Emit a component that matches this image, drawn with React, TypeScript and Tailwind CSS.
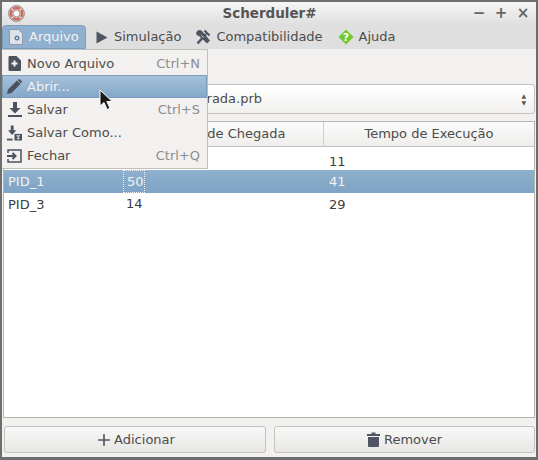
import { Plus } from "lucide-react";

const font = "font-['DejaVu_Sans',sans-serif]";

const LifeRing = () => (
  <svg width="17" height="17" viewBox="0 0 17 17">
    <circle cx="8.5" cy="8.5" r="7.800" fill="#f0e6e4" stroke="#6e6e6e" strokeWidth="0.9" />
    <circle cx="8.5" cy="8.5" r="5.600" fill="none" stroke="#cf6a5c" strokeWidth="2.600" />
    <circle cx="8.5" cy="8.5" r="3.500" fill="#f8f8f8" stroke="#777" strokeWidth="0.8" />
    <path d="M3.600 3.600l2 2M13.400 3.600l-2 2M3.600 13.400l2-2M13.400 13.400l-2-2" stroke="#f3e9e7" strokeWidth="1.200" />
  </svg>
);

const FileIcon = () => (
  <svg width="14" height="16" viewBox="0 0 14 16">
    <path d="M0.500 0.500h9l4 4v11H0.500z" fill="#dfe3e8" stroke="#8f98a8" />
    <circle cx="8" cy="9" r="1.800" fill="none" stroke="#5f7fa6" strokeWidth="1.400" />
  </svg>
);

const PlayIcon = () => (
  <svg width="12" height="13" viewBox="0 0 12 13">
    <path d="M0.500 0.500L11.500 6.500 0.500 12.500z" fill="#4f5563" />
  </svg>
);

const ToolsIcon = () => (
  <svg width="16" height="16" viewBox="0 0 16 16" fill="none">
    <path d="M2.500 14.500L11 5" stroke="#4f5563" strokeWidth="2.600" />
    <path d="M1 4c1-3 4-4 6-2l8 9.500-3 3L4 7C2.500 7 1.500 6 1 4z" fill="#4f5563" />
    <path d="M9.500 1.500l5 5" stroke="#4f5563" strokeWidth="2.200" />
    <path d="M6.500 6.500l2 2" stroke="#dfdfdf" strokeWidth="1" />
  </svg>
);

const HelpIcon = () => (
  <svg width="16" height="16" viewBox="0 0 16 16">
    <path d="M8 0.500L15.500 8 8 15.500 0.500 8z" fill="#6fc92f" />
    <text x="8" y="12" fontSize="11" fontWeight="700" textAnchor="middle" fill="#fff">?</text>
  </svg>
);

const NewIcon = () => (
  <svg width="13" height="15" viewBox="0 0 13 15">
    <path d="M1.500 0h7L13 4.500V14a1 1 0 0 1-1 1H1.500a1 1 0 0 1-1-1V1a1 1 0 0 1 1-1z" fill="#4c5160" />
    <path d="M6.500 4.500v6M3.500 7.500h6" stroke="#f2f1f0" strokeWidth="2" />
  </svg>
);

const PencilIcon = () => (
  <svg width="15" height="15" viewBox="0 0 15 15">
    <path d="M0 15l1-4.500L10 1.500 13.500 5 4.500 14z" fill="#4c5160" />
    <path d="M11.500 0.500l3 3" stroke="#4c5160" strokeWidth="2" />
  </svg>
);

const SaveIcon = () => (
  <svg width="14" height="15" viewBox="0 0 14 15">
    <path d="M5 0h4v6h3.500L7 11.500 1.500 6H5z" fill="#4c5160" />
    <path d="M0 14h14" stroke="#4c5160" strokeWidth="2" />
  </svg>
);

const SaveAsIcon = () => (
  <svg width="16" height="16" viewBox="0 0 16 16">
    <path d="M4 0h3v5h3L5.500 10 1 5h3z" fill="#4c5160" />
    <path d="M0 15h6" stroke="#4c5160" strokeWidth="2" />
    <rect x="8" y="9" width="8" height="7" fill="#4c5160" />
    <path d="M10 11h4M12 11v3M10.500 14h3" stroke="#f2f1f0" strokeWidth="1" />
  </svg>
);

const CloseIcon = () => (
  <svg width="15" height="14" viewBox="0 0 15 14" fill="none">
    <path d="M1 4V1h13v12H1v-3" stroke="#4c5160" strokeWidth="1.500" />
    <path d="M0 7h8M5.500 4l3 3-3 3" stroke="#4c5160" strokeWidth="2" />
  </svg>
);

const TrashIcon = () => (
  <svg width="13" height="15" viewBox="0 0 13 15">
    <path d="M0 2h4.500V0.500h4V2H13v2H0z" fill="#4f5563" />
    <path d="M1 5h11v9a1 1 0 0 1-1 1H2a1 1 0 0 1-1-1z" fill="#4f5563" />
  </svg>
);

const Cursor = () => (
  <svg width="15" height="22" viewBox="0 0 15 22">
    <path d="M1 1v16l4-3.500 3.200 7 2.800-1.200-3.200-6.800h5.500z" fill="#1a1a1a" stroke="#fff" strokeWidth="1" />
  </svg>
);

const items = [
  { label: "Novo Arquivo", shortcut: "Ctrl+N", icon: <NewIcon /> },
  { label: "Abrir...", shortcut: "", icon: <PencilIcon />, active: true },
  { label: "Salvar", shortcut: "Ctrl+S", icon: <SaveIcon /> },
  { label: "Salvar Como...", shortcut: "", icon: <SaveAsIcon /> },
  { label: "Fechar", shortcut: "Ctrl+Q", icon: <CloseIcon /> },
];

// the first row's first two cells sit behind the open menu
const rows = [
  { pid: "", arrival: "", burst: "11" },
  { pid: "PID_1", arrival: "50", burst: "41", selected: true },
  { pid: "PID_3", arrival: "14", burst: "29" },
];

export default function App() {
  return (
    <div className={`${font} relative flex h-[460px] w-[538px] flex-col overflow-hidden border-x-2 border-t-2 border-b-[3px] border-[#6e6e6e] bg-[#f2f1f0] text-[13px] text-[#4c4c4c]`}>
      {/* Title bar */}
      <div className="flex h-[23px] items-center bg-gradient-to-b from-[#f6f6f6] to-[#dfdfdf] pl-[6px] pr-[2px]">
        <LifeRing />
        <div className="flex-1 pl-[46px] text-center text-[13.500px] font-bold text-[#555]">Scherduler#</div>
        <div className="flex text-center text-[15px] font-bold leading-none text-[#666]">
          <span className="w-[22px]">−</span>
          <span className="w-[22px]">+</span>
          <span className="w-[22px]">×</span>
        </div>
      </div>

      {/* Menu bar */}
      <div className="flex h-[24px] items-center bg-[#dfdfdf]">
        <div className="flex h-[24px] w-[84px] items-center gap-[6px] rounded-t-[4px] border border-[#7b9ebd] bg-[#8fb0ce] pl-[6px] text-[#f2f2f2]">
          <FileIcon />
          <span>Arquivo</span>
        </div>
        <div className="ml-[10px] flex items-center gap-[6px]">
          <PlayIcon />
          <span>Simulação</span>
        </div>
        <div className="ml-[14px] flex items-center gap-[5px]">
          <ToolsIcon />
          <span>Compatibilidade</span>
        </div>
        <div className="ml-[15px] flex items-center gap-[5px]">
          <HelpIcon />
          <span>Ajuda</span>
        </div>
      </div>

      {/* Content */}
      <div className="flex min-h-0 flex-1 flex-col px-[1px] pt-[35px]">
        <div className="flex h-[30px] items-center justify-between rounded-[3px] border border-[#c4c2bd] bg-gradient-to-b from-white to-[#f2f1f0] pl-[181px] pr-[8px]">
          <span>Entrada.prb</span>
          <span className="flex flex-col text-[6px] leading-[7px] text-[#555]">
            <span>▲</span>
            <span>▼</span>
          </span>
        </div>

        <div className="mt-[7px] flex h-[297px] flex-col border border-[#b6b4af] bg-white">
          <div className="grid h-[25px] grid-cols-[119px_201px_1fr] border-b border-[#c4c2bd] bg-gradient-to-b from-[#fbfbfb] to-[#efeeec] text-center">
            <div className="border-r border-[#d0cec9]" />
            <div className="flex items-center justify-center border-r border-[#d0cec9]">Tempo de Chegada</div>
            <div className="flex items-center justify-center">Tempo de Execução</div>
          </div>
          {rows.map((row) => (
            <div
              key={row.burst}
              className={`grid h-[23px] grid-cols-[119px_201px_1fr] items-center ${row.selected ? "bg-gradient-to-b from-[#8fb0ce] to-[#7ea3c4] text-[#f2f2f2]" : "text-[#3c3c3c]"}`}
            >
              <div className="pl-[4px]">{row.pid}</div>
              <div>
                <span className={`inline-block h-[23px] w-[22px] pl-[3px] leading-[22px] ${row.selected ? "border border-dotted border-[#f2f2f2]" : ""}`}>{row.arrival}</span>
              </div>
              <div className="pl-[5px]">{row.burst}</div>
            </div>
          ))}
        </div>

        <div className="mt-[8px] grid grid-cols-[262px_1fr] gap-[8px] pl-[1px]">
          <button className="flex h-[27px] items-center justify-center gap-[1px] rounded-[3px] border border-[#c4c2bd] bg-gradient-to-b from-[#f8f8f8] to-[#e8e7e5]">
            <Plus size={18} strokeWidth={2.200} className="text-[#4f5563]" />
            Adicionar
          </button>
          <button className="flex h-[27px] items-center justify-center gap-[4px] rounded-[3px] border border-[#c4c2bd] bg-gradient-to-b from-[#f8f8f8] to-[#e8e7e5]">
            <TrashIcon />
            Remover
          </button>
        </div>
      </div>

      {/* Open menu */}
      <div className="absolute left-[-1px] top-[47px] w-[207px] border border-[#c0bfbb] bg-[#f2f1f0] pb-[1px] pt-[2px]">
        {items.map((item) => (
          <div
            key={item.label}
            className={`flex h-[23px] items-center justify-between pr-[7px] ${item.active ? "border border-[#7b9ebd] bg-gradient-to-b from-[#a6c1da] to-[#84a8c9] pl-[4px] text-[#f2f2f2]" : "pl-[5px]"}`}
          >
            <span className="flex items-center gap-[5px]">
              <span className="flex w-[15px] justify-center">{item.icon}</span>
              {item.label}
            </span>
            <span className="text-[#8c8c8c]">{item.shortcut}</span>
          </div>
        ))}
      </div>

      {/* Mouse pointer */}
      <div className="absolute left-[97px] top-[87px]">
        <Cursor />
      </div>
    </div>
  );
}
